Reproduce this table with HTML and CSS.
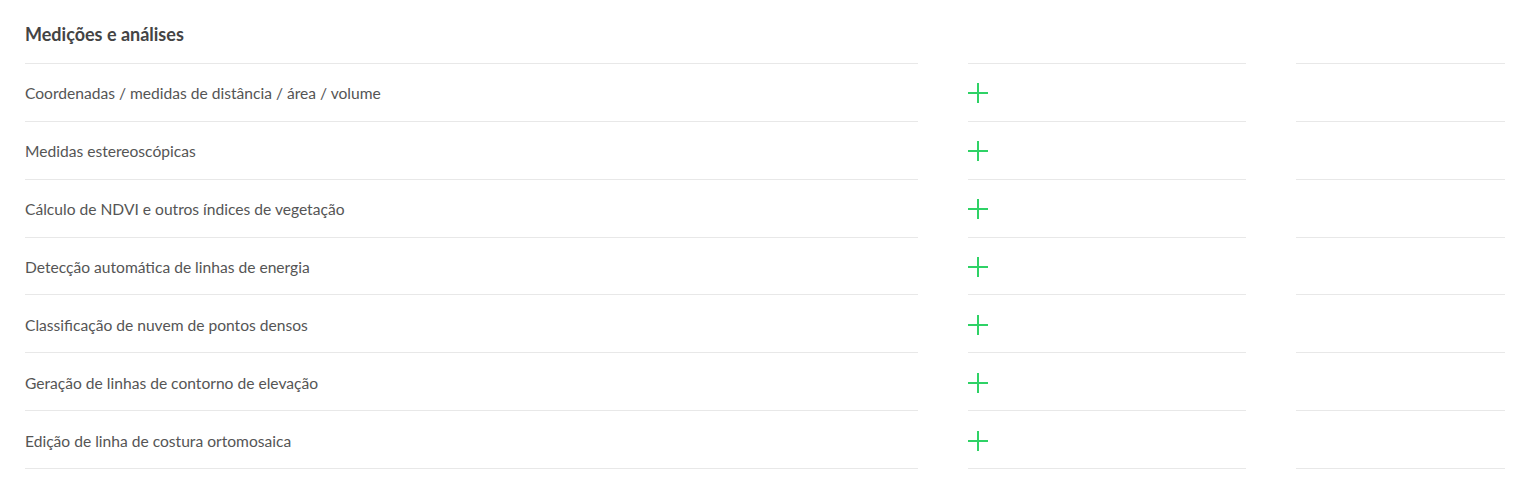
FILE: index.html
```html
<!DOCTYPE html>
<html lang="pt">
<head>
<meta charset="utf-8">
<title>Medições e análises</title>
<link rel="stylesheet" href="styles.css">
</head>
<body>
<div class="table">
  <div class="cell head"><h2 class="title">Medições e análises</h2></div>
  <div class="cell head"></div>
  <div class="cell head"></div>

  <div class="cell label">Coordenadas / medidas de distância / área / volume</div>
  <div class="cell mark"><svg class="plus" viewBox="0 0 20 20"><path d="M10 0V20M0 10H20"/></svg></div>
  <div class="cell"></div>

  <div class="cell label">Medidas estereoscópicas</div>
  <div class="cell mark"><svg class="plus" viewBox="0 0 20 20"><path d="M10 0V20M0 10H20"/></svg></div>
  <div class="cell"></div>

  <div class="cell label">Cálculo de NDVI e outros índices de vegetação</div>
  <div class="cell mark"><svg class="plus" viewBox="0 0 20 20"><path d="M10 0V20M0 10H20"/></svg></div>
  <div class="cell"></div>

  <div class="cell label">Detecção automática de linhas de energia</div>
  <div class="cell mark"><svg class="plus" viewBox="0 0 20 20"><path d="M10 0V20M0 10H20"/></svg></div>
  <div class="cell"></div>

  <div class="cell label">Classificação de nuvem de pontos densos</div>
  <div class="cell mark"><svg class="plus" viewBox="0 0 20 20"><path d="M10 0V20M0 10H20"/></svg></div>
  <div class="cell"></div>

  <div class="cell label">Geração de linhas de contorno de elevação</div>
  <div class="cell mark"><svg class="plus" viewBox="0 0 20 20"><path d="M10 0V20M0 10H20"/></svg></div>
  <div class="cell"></div>

  <div class="cell label">Edição de linha de costura ortomosaica</div>
  <div class="cell mark"><svg class="plus" viewBox="0 0 20 20"><path d="M10 0V20M0 10H20"/></svg></div>
  <div class="cell"></div>
</div>
</body>
</html>
```
FILE: styles.css
```css
html, body {
  margin: 0;
  padding: 0;
  background: #fff;
}
body {
  font-family: Lato, "Open Sans", "Liberation Sans", sans-serif;
  color: #555;
}
.table {
  display: grid;
  grid-template-columns: 893px 278px 209px;
  column-gap: 50px;
  padding-left: 25px;
}
.cell {
  height: 56.86px;
  border-bottom: 1px solid #e8e8e8;
  display: flex;
  align-items: center;
}
.cell.head {
  height: 63px;
  align-items: flex-start;
}
.title {
  margin: 23px 0 0;
  font-size: 18px;
  line-height: 22px;
  font-weight: 700;
  color: #444;
}
.label {
  font-size: 15.6px;
  line-height: 20px;
  padding-top: 2px;
  height: 54.86px;
}
.plus {
  width: 20px;
  height: 20px;
  margin-top: 2px;
}
.plus path {
  stroke: #2fd266;
  stroke-width: 2;
  fill: none;
}
```
